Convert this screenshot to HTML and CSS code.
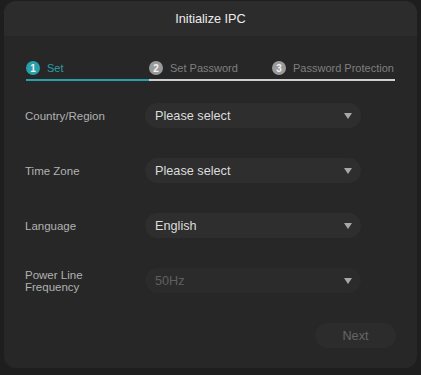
FILE: index.html
```html
<!DOCTYPE html>
<html>
<head>
<meta charset="utf-8">
<link rel="stylesheet" href="styles.css">
</head>
<body>
<div class="dialog">
  <div class="header">Initialize IPC</div>
  <div class="content">
    <div class="steps">
      <div class="step active"><span class="num">1</span><span class="label">Set</span></div>
      <div class="step"><span class="num">2</span><span class="label">Set Password</span></div>
      <div class="step"><span class="num">3</span><span class="label">Password Protection</span></div>
    </div>
    <div class="form">
      <div class="row">
        <div class="field-label">Country/Region</div>
        <div class="select"><span>Please select</span><span class="arrow"></span></div>
      </div>
      <div class="row">
        <div class="field-label">Time Zone</div>
        <div class="select"><span>Please select</span><span class="arrow"></span></div>
      </div>
      <div class="row">
        <div class="field-label">Language</div>
        <div class="select"><span>English</span><span class="arrow"></span></div>
      </div>
      <div class="row">
        <div class="field-label two">Power Line<br>Frequency</div>
        <div class="select disabled"><span>50Hz</span><span class="arrow"></span></div>
      </div>
    </div>
    <div class="footer">
      <div class="btn">Next</div>
    </div>
  </div>
</div>
</body>
</html>
```
FILE: styles.css
```css
html, body {
  margin: 0;
  padding: 0;
  background: #1e1e1e;
  font-family: "Liberation Sans", Arial, sans-serif;
}
body {
  width: 421px;
  height: 375px;
  overflow: hidden;
}
.dialog {
  margin: 1px 4px 0 4px;
  width: 413px;
  height: 367px;
  border-radius: 12px;
  background: #272727;
  overflow: hidden;
}
.header {
  height: 35px;
  background: #2c2c2c;
  color: #ececec;
  font-size: 12.7px;
  display: flex;
  align-items: center;
  justify-content: center;
}
.content {
  padding: 25px 22px 0 22px;
}
.steps {
  display: flex;
}
.step {
  flex: 1;
  display: flex;
  align-items: center;
  gap: 7px;
  padding-bottom: 4px;
  border-bottom: 2px solid #cfcfcf;
  color: #7f7f7f;
  font-size: 11px;
  white-space: nowrap;
  height: 14px;
}
.step .num {
  flex: none;
  width: 14px;
  height: 14px;
  border-radius: 50%;
  background: #9a9a9a;
  color: #f2f2f2;
  font-size: 10px;
  font-weight: bold;
  display: flex;
  align-items: center;
  justify-content: center;
}
.step.active {
  border-bottom-color: #27a0aa;
  color: #2a9fa9;
}
.step.active .num {
  background: #27a0aa;
}
.form {
  display: flex;
  flex-direction: column;
  gap: 30px;
  margin-top: 22px;
}
.row {
  display: flex;
  align-items: center;
  height: 25px;
}
.field-label {
  width: 119px;
  margin-left: -1px;
  padding-right: 1px;
  color: #b2b2b2;
  font-size: 11.5px;
}
.field-label.two {
  line-height: 12px;
}
.select {
  width: 216px;
  height: 25px;
  box-sizing: border-box;
  border-radius: 13px;
  background: #2e2e2e;
  display: flex;
  align-items: center;
  justify-content: space-between;
  padding: 0 9px 0 10px;
  color: #dcdcdc;
  font-size: 12.7px;
}
.select.disabled {
  background: #2b2b2b;
  color: #5f5f5f;
}
.arrow {
  width: 0;
  height: 0;
  border-left: 4.5px solid transparent;
  border-right: 4.5px solid transparent;
  border-top: 6px solid #a8a8a8;
}
.footer {
  display: flex;
  justify-content: flex-end;
  margin-top: 30px;
  margin-right: -1px;
}
.btn {
  width: 81px;
  height: 25px;
  border-radius: 13px;
  background: #2c2c2c;
  color: #666666;
  font-size: 12.7px;
  display: flex;
  align-items: center;
  justify-content: center;
}
```
